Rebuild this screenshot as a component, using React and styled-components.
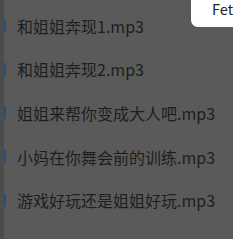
import React from 'react';
import styled, { createGlobalStyle } from 'styled-components';

const GlobalStyle = createGlobalStyle`
  html, body {
    margin: 0;
    padding: 0;
    background: #5a5a5a;
  }
`;

const Page = styled.div`
  position: relative;
  display: flex;
  width: 233px;
  height: 239px;
  overflow: hidden;
  background: #5a5a5a;
  font-family: "Noto Sans CJK SC", "Noto Sans", sans-serif;
`;

const Edge = styled.div`
  flex: 0 0 4px;
  background: #4c4c4c;
`;

const List = styled.ul`
  flex: 1;
  margin: 0;
  padding: 4px 0 0;
  list-style: none;
`;

const Item = styled.li`
  display: flex;
  align-items: center;
  height: 43.6px;
`;

const Marker = styled.span`
  flex: 0 0 2px;
  height: 13px;
  background: #24507a;
  margin-right: 11px;
`;

const Name = styled.span`
  color: #1e1e1e;
  font-size: 16px;
  white-space: nowrap;
`;

const Toast = styled.div`
  position: absolute;
  top: 0;
  left: 191px;
  width: 42px;
  height: 27px;
  box-sizing: border-box;
  padding: 0 0 0 21px;
  overflow: hidden;
  background: #ffffff;
  border-bottom-left-radius: 7px;
  color: #222222;
  font-size: 14.5px;
  line-height: 17px;
  white-space: nowrap;
`;

const tracks = [
  '和姐姐奔现1.mp3',
  '和姐姐奔现2.mp3',
  '姐姐来帮你变成大人吧.mp3',
  '小妈在你舞会前的训练.mp3',
  '游戏好玩还是姐姐好玩.mp3',
];

export default function App() {
  return (
    <Page>
      <GlobalStyle />
      <Edge />
      <List>
        {tracks.map((t) => (
          <Item key={t}>
            <Marker />
            <Name>{t}</Name>
          </Item>
        ))}
      </List>
      <Toast>Fetching</Toast>
    </Page>
  );
}
